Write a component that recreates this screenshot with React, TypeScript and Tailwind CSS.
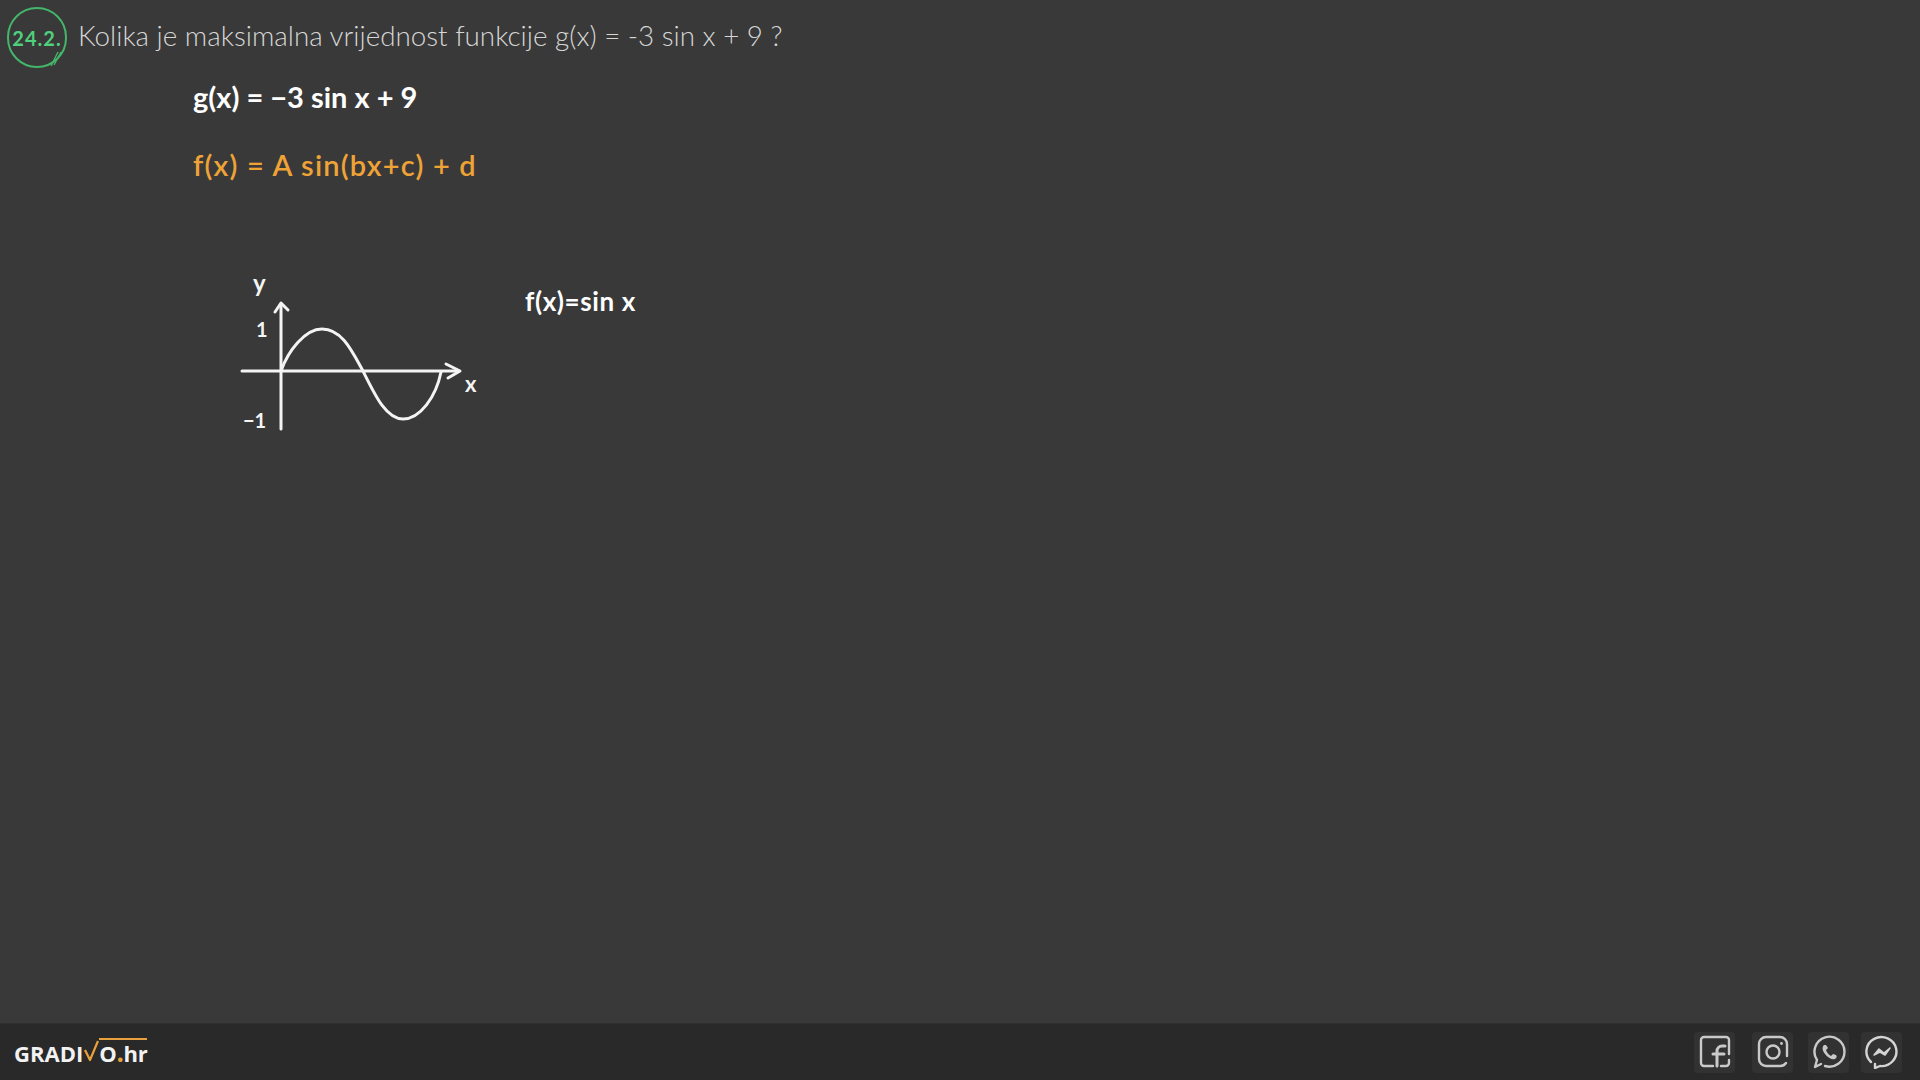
const handFont = "font-['Lato',sans-serif]";

function SineGraph() {
  return (
    <svg width="250" height="170" viewBox="235 268 250 170" fill="none" stroke="#f4f4f4" strokeWidth="3" strokeLinecap="round" strokeLinejoin="round">
      <path d="M281 428 L281 303" />
      <path d="M275 311 L281 302 L288 309" />
      <path d="M242 370 L459 370" />
      <path d="M446 363 L460 370 L448 377" />
      <path d="M281 370 C288 350 305 328 322 328 C342 328 352 350 363 370 C375 394 386 418 403 418 C420 418 436 396 441 371" />
      <g fill="#f4f4f4" stroke="none" fontFamily="Lato, sans-serif" fontWeight="700">
        <text x="253" y="291" fontSize="24">y</text>
        <text x="256" y="336" fontSize="20">1</text>
        <text x="243" y="427" fontSize="20">−1</text>
        <text x="465" y="391" fontSize="22">x</text>
      </g>
    </svg>
  );
}

function FacebookIcon() {
  return (
    <svg width="34" height="34" viewBox="0 0 34 34" fill="none" stroke="#c9c9c9" strokeWidth="2.4" strokeLinecap="round" strokeLinejoin="round">
      <path d="M31 19 V5 a3 3 0 0 0 -3 -3 H6 a3 3 0 0 0 -3 3 V28 a3 3 0 0 0 3 3 H15" />
      <path d="M31 25 V28 a3 3 0 0 1 -3 3 H23" />
      <path d="M19 31 V16 a5 5 0 0 1 5 -5 H27 M15 19 H26" strokeWidth="3" />
    </svg>
  );
}

function InstagramIcon() {
  return (
    <svg width="34" height="34" viewBox="0 0 34 34" fill="none" stroke="#c9c9c9" strokeWidth="2.4" strokeLinecap="round">
      <path d="M31 21 V9 a7 7 0 0 0 -7 -7 H10 a7 7 0 0 0 -7 7 V24 a7 7 0 0 0 7 7 H24 a7 7 0 0 0 6 -3" />
      <circle cx="17" cy="17" r="6.5" />
      <circle cx="25.5" cy="8.5" r="1.4" fill="#c9c9c9" stroke="none" />
    </svg>
  );
}

function WhatsappIcon() {
  return (
    <svg width="34" height="34" viewBox="0 0 34 34" fill="none" stroke="#c9c9c9" strokeWidth="2.4" strokeLinecap="round" strokeLinejoin="round">
      <path d="M9 29 L3 32 L5 25 A15 15 0 1 1 13 31" />
      <path d="M12 10 C10 12 10 15 13 19 C16 23 20 25 23 24 C25 23 25 21 24 20 L21 19 L19 21 C17 20 15 18 14 15 L16 13 L14 10 Z" fill="#c9c9c9" stroke="none" />
    </svg>
  );
}

function MessengerIcon() {
  return (
    <svg width="34" height="34" viewBox="0 0 34 34" fill="none" stroke="#d4d4d4" strokeWidth="2.4" strokeLinecap="round" strokeLinejoin="round">
      <path d="M10 29 V33 L15 31 A15 14.5 0 1 0 6 27" />
      <path d="M9 20 L14 14 L19 18 L25 13 L20 20 L15 17 Z" fill="#d4d4d4" strokeWidth="1.6" />
    </svg>
  );
}

const socialIcons = [
  { name: "facebook", icon: <FacebookIcon />, gap: "" },
  { name: "instagram", icon: <InstagramIcon />, gap: "ml-[17px]" },
  { name: "whatsapp", icon: <WhatsappIcon />, gap: "ml-[15px]" },
  { name: "messenger", icon: <MessengerIcon />, gap: "ml-[12px]" },
];

export default function App() {
  return (
    <div className="h-screen w-full flex flex-col overflow-hidden bg-[#393939]">
      <main className="flex-1">
        {/* Question */}
        <div className="flex items-center pt-[7px] pl-[7px]">
          <div className="relative w-[60px] h-[61px] rounded-full border-2 border-[#44b56a] flex items-center justify-center">
            <span className={`${handFont} text-[20px] font-bold tracking-[1px] text-[#4fd07c]`}>
              24.2.
            </span>
            <svg className="absolute left-[41px] top-[42px]" width="12" height="16" viewBox="0 0 12 16" fill="none" stroke="#44b56a" strokeWidth="1.4">
              <path d="M8 1 L1 15" />
              <path d="M11 1 L4 14" />
            </svg>
          </div>
          <p className={`ml-[11px] mb-[3px] ${handFont} text-[27.8px] font-light text-[#d6d6d6] whitespace-nowrap`}>
            Kolika je maksimalna vrijednost funkcije g(x) = -3 sin x + 9 ?
          </p>
        </div>

        {/* Working */}
        <div className={`ml-[193px] mt-[11px] ${handFont}`}>
          <p className="text-[29px] leading-[36px] font-bold text-white whitespace-nowrap">
            g(x) = −3 sin x + 9
          </p>
          <p className="mt-[32px] text-[29px] leading-[36px] tracking-[1.2px] font-semibold text-[#efa336] whitespace-nowrap">
            f(x) = A sin(bx+c) + d
          </p>
        </div>

        {/* Graph */}
        <div className="flex items-start ml-[235px] mt-[86px]">
          <SineGraph />
          <p className={`ml-[40px] mt-[15px] ${handFont} text-[26px] leading-[34px] tracking-[0.6px] font-bold text-white whitespace-nowrap`}>
            f(x)=sin x
          </p>
        </div>
      </main>

      <footer className="h-[57px] shrink-0 bg-[#292929] border-t border-[#2f2f2f] flex items-center justify-between pl-[14px] pr-[18px]">
        <div className="flex items-baseline font-['Open_Sans',sans-serif] font-bold text-[22px] leading-[26px] text-[#f2f2f2]">
          <span>GRADI</span>
          <svg className="ml-[1px] self-end mb-[3px]" width="15" height="24" viewBox="0 0 15 24" fill="none" stroke="#e8a13c" strokeWidth="2.2" strokeLinejoin="round">
            <path d="M1 11 L6 21 L14 2" />
          </svg>
          <span className="border-t-2 border-[#e8a13c] tracking-[-0.3px]">
            O<span className="text-[#e8a13c] text-[26px] leading-[20px]">.</span>hr
          </span>
        </div>
        <div className="flex items-center">
          {socialIcons.map((s) => (
            <div key={s.name} className={`${s.gap} w-[41px] h-[41px] rounded-[4px] bg-[#323232] flex items-center justify-center`}>
              {s.icon}
            </div>
          ))}
        </div>
      </footer>
    </div>
  );
}
